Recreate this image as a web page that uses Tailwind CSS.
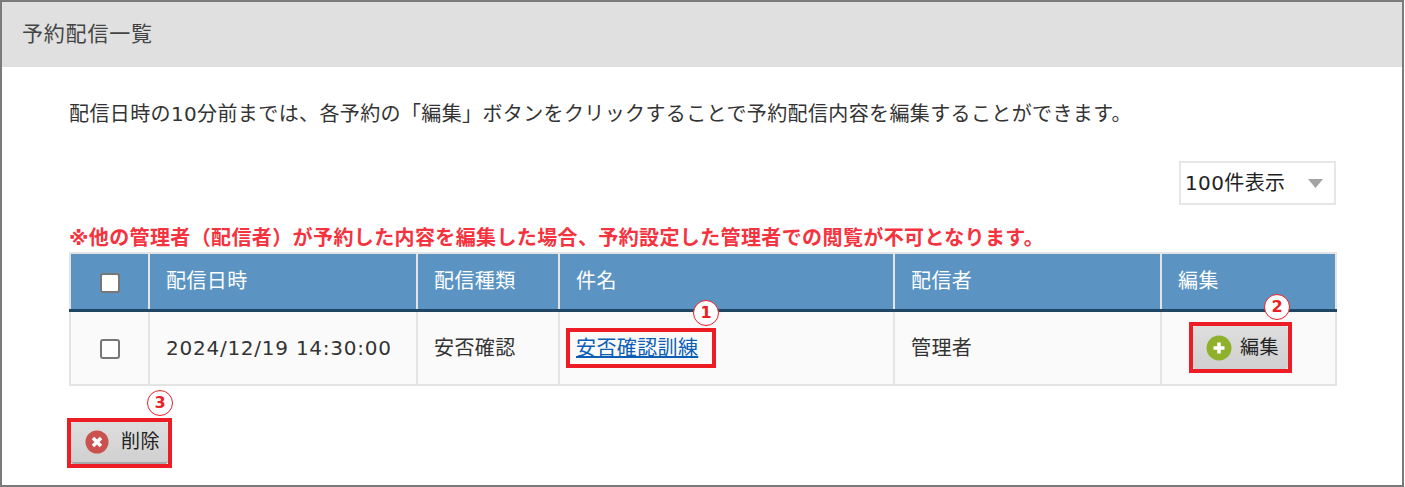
<!DOCTYPE html>
<html lang="ja">
 <head>
  <meta charset="utf-8"/>
  <meta content="width=device-width, initial-scale=1.0" name="viewport"/>
  <title>予約配信一覧</title>
  <script src="https://cdn.jsdelivr.net/npm/@tailwindcss/browser@4"></script>
 </head>
 <body class="bg-white overflow-hidden font-['DejaVu_Sans','Noto_Sans_CJK_JP',sans-serif]">
  <div class="w-[1404px] h-[487px] border-2 border-[#7a7a7a] text-[#333] text-[20px] tracking-[0.38px]">
   <!-- Title -->
   <div class="h-[65px] bg-[#e0e0e0] flex items-center pl-[20px] text-[21px] tracking-[0.8px] text-[#444]">予約配信一覧</div>
   <div class="pl-[67px] pr-[65px]">
    <p class="mt-[32px] h-[30px] leading-[30px]">配信日時の10分前までは、各予約の「編集」ボタンをクリックすることで予約配信内容を編集することができます。</p>
    <div class="flex justify-end mt-[32px] pr-[1px]">
     <div class="w-[157px] h-[44px] border-2 border-[#e6e6e6] flex items-center justify-between pl-[4px] pr-[11px] text-[#222]">
      <span>100件表示</span>
      <svg width="15" height="9" viewBox="0 0 15 9"><path d="M0 0H15L7.5 9Z" fill="#a3a3a3"/></svg>
     </div>
    </div>
    <p class="mt-[18px] h-[29px] leading-[30px] font-bold text-[#f5333f]">※他の管理者（配信者）が予約した内容を編集した場合、予約設定した管理者での閲覧が不可となります。</p>
    <!-- Table -->
    <table class="w-[1268px] table-fixed border-collapse">
     <thead>
      <tr class="h-[57px] bg-[#5b94c2] text-white text-left">
       <th class="w-[79px] font-normal border-2 border-[#e4e4e4] border-b-[#1f4663] border-b-[3px] text-center pl-[1px]">
        <span class="inline-block align-middle w-[20px] h-[20px] rounded-[3px] bg-white border-2 border-[#777]"></span>
       </th>
       <th class="w-[268px] font-normal border-2 border-[#e4e4e4] border-b-[#1f4663] border-b-[3px] pl-[16px]">配信日時</th>
       <th class="w-[142px] font-normal border-2 border-[#e4e4e4] border-b-[#1f4663] border-b-[3px] pl-[16px]">配信種類</th>
       <th class="w-[335px] font-normal border-2 border-[#e4e4e4] border-b-[#1f4663] border-b-[3px] pl-[16px]">件名</th>
       <th class="w-[267px] font-normal border-2 border-[#e4e4e4] border-b-[#1f4663] border-b-[3px] pl-[16px]">配信者</th>
       <th class="font-normal border-2 border-[#e4e4e4] border-b-[#1f4663] border-b-[3px] pl-[16px]">編集</th>
      </tr>
     </thead>
     <tbody>
      <tr class="h-[75px] bg-[#fafafa]">
       <td class="border-2 border-[#e4e4e4] text-center pl-[1px]">
        <span class="inline-block align-middle w-[20px] h-[20px] rounded-[3px] bg-white border-2 border-[#777]"></span>
       </td>
       <td class="border-2 border-[#e4e4e4] pl-[16px] tracking-[0.75px]">2024/12/19 14:30:00</td>
       <td class="border-2 border-[#e4e4e4] pl-[16px]">安否確認</td>
       <td class="border-2 border-[#e4e4e4] pl-[6px]">
        <span class="relative inline-block align-middle border-4 border-[#ee1c25] h-[40px] w-[150px] pl-[6px] leading-[32px]">
         <a href="#" class="text-[#0b5db5] underline">安否確認訓練</a>
         <span class="absolute left-[123px] top-[-32px] w-[26px] h-[26px] rounded-full border-[1.5px] border-[#ee1c25] bg-white text-[#ee1c25] text-[16px] tracking-normal font-bold leading-[24px] text-center">1</span>
        </span>
       </td>
       <td class="border-2 border-[#e4e4e4] pl-[16px]">管理者</td>
       <td class="border-2 border-[#e4e4e4] pl-[27px]">
        <span class="relative inline-block align-middle border-4 border-[#ee1c25]">
         <span class="flex items-center w-[95px] h-[43px] pl-[13px] gap-[8px] bg-gradient-to-b from-[#dedede] to-[#d0d0d0] rounded-[3px] text-[#222]">
          <svg width="26" height="26" viewBox="0 0 26 26"><circle cx="13" cy="13" r="12.5" fill="#8fb02a"/><path d="M13 7.5V18.5M7.5 13H18.5" stroke="#fff" stroke-width="3.5"/></svg>
          <span class="text-[19px] leading-[26px] -mt-[2px]">編集</span>
         </span>
         <span class="absolute left-[71px] top-[-32px] w-[26px] h-[26px] rounded-full border-[1.5px] border-[#ee1c25] bg-white text-[#ee1c25] text-[16px] tracking-normal font-bold leading-[24px] text-center">2</span>
        </span>
       </td>
      </tr>
     </tbody>
    </table>
    <!-- Delete -->
    <div class="mt-[32px] -ml-[2px]">
     <span class="relative inline-block border-4 border-[#ee1c25]">
      <span class="flex items-center w-[97px] h-[42px] pl-[14px] gap-[12px] bg-gradient-to-b from-[#dedede] to-[#d0d0d0] border-b-2 border-b-[#a8a8a8] rounded-[3px] text-[#222]">
       <svg width="24" height="24" viewBox="0 0 24 24"><circle cx="12" cy="12" r="11.5" fill="#c9524f"/><path d="M8 8L16 16M16 8L8 16" stroke="#fff" stroke-width="3.5"/></svg>
       <span class="text-[19px] leading-[26px] -mt-[2px]">削除</span>
      </span>
      <span class="absolute left-[76px] top-[-32px] w-[26px] h-[26px] rounded-full border-[1.5px] border-[#ee1c25] bg-white text-[#ee1c25] text-[16px] tracking-normal font-bold leading-[24px] text-center">3</span>
     </span>
    </div>
   </div>
  </div>
 </body>
</html>
